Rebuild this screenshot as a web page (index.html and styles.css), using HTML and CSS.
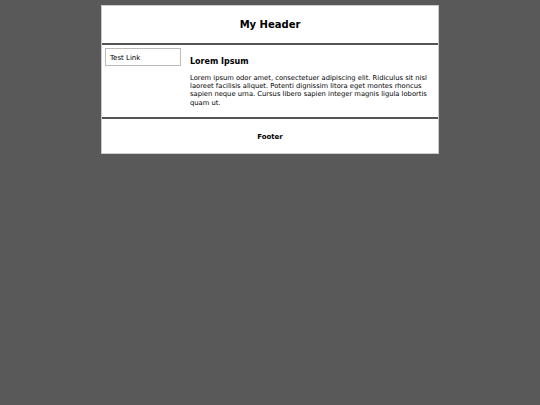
FILE: index.html
```html
<!DOCTYPE html>
<html>
<head>
<meta charset="utf-8">
<link rel="stylesheet" href="styles.css">
</head>
<body>
<div class="page">
  <header class="header"><h1>My Header</h1></header>
  <div class="content">
    <nav class="nav"><a class="nav-link" href="#">Test Link</a></nav>
    <main class="main">
      <h2>Lorem Ipsum</h2>
      <p>Lorem ipsum odor amet, consectetuer adipiscing elit. Ridiculus sit nisl laoreet facilisis aliquet. Potenti dignissim litora eget montes rhoncus sapien neque urna. Cursus libero sapien integer magnis ligula lobortis quam ut.</p>
    </main>
  </div>
  <footer class="footer">Footer</footer>
</div>
</body>
</html>
```
FILE: styles.css
```css
html, body { margin: 0; padding: 0; }
body {
  background: #595959;
  font-family: "DejaVu Sans", Verdana, sans-serif;
  color: #000;
}
.page {
  width: 336px;
  margin: 5px auto 0;
  background: #fff;
  border: 1px solid #ccc;
}
.header {
  height: 37px;
  display: flex;
  align-items: center;
  justify-content: center;
  border-bottom: 2px solid #555;
}
.header h1 {
  margin: 0;
  font-size: 10px;
  font-weight: bold;
}
.content {
  display: flex;
  height: 72px;
  border-bottom: 2px solid #555;
}
.nav {
  width: 84px;
  padding: 3px 0 0 3px;
}
.nav-link {
  display: block;
  width: 70px;
  height: 16px;
  line-height: 18px;
  padding-left: 4px;
  border: 1px solid #bbb;
  font-size: 7px;
  color: #000;
  text-decoration: none;
}
.main {
  flex: 1;
  padding: 0 5px 0 1px;
}
.main h2 {
  margin: 12px 0 0;
  font-size: 8px;
  font-weight: bold;
}
.main p {
  margin: 8px 0 0;
  font-size: 6.75px;
  line-height: 8.2px;
}
.footer {
  height: 33px;
  padding-top: 1px;
  display: flex;
  align-items: center;
  justify-content: center;
  font-size: 7px;
  font-weight: bold;
}
```
